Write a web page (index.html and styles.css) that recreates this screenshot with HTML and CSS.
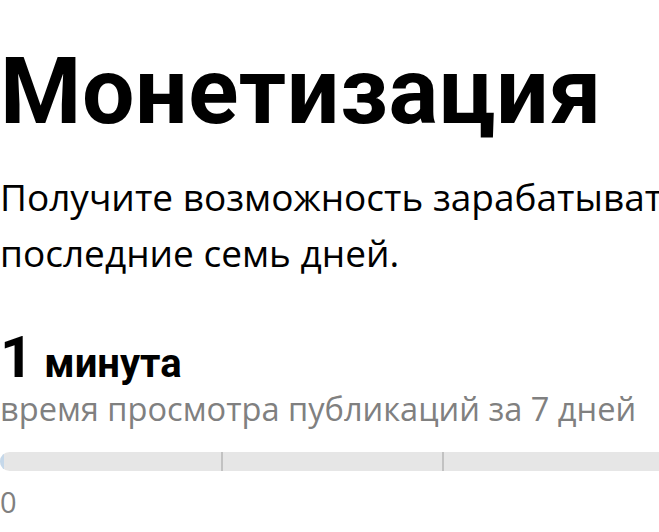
FILE: index.html
```html
<!DOCTYPE html>
<html lang="ru">
<head>
<meta charset="utf-8">
<link rel="stylesheet" href="styles.css">
</head>
<body>
<div class="page">
  <h1 class="title">Монетизация</h1>
  <p class="lead">Получите возможность зарабатывать на просмотрах за<br>последние семь дней.</p>
  <div class="value"><span class="num">1</span><span class="unit">минута</span></div>
  <div class="caption">время просмотра публикаций за 7 дней</div>
  <div class="bar">
    <div class="fill" style="width: 4px"></div>
    <div class="seg"></div>
    <div class="seg"></div>
    <div class="seg"></div>
  </div>
  <div class="scale"><span>0</span></div>
</div>
</body>
</html>
```
FILE: styles.css
```css
html, body {
  margin: 0;
  padding: 0;
  background: #fff;
  overflow: hidden;
}
.page {
  width: 1000px;
  font-family: "Open Sans", "Noto Sans", sans-serif;
  color: #000;
}
.title {
  margin: 0;
  padding-top: 38px;
  font-family: Roboto, "Noto Sans", sans-serif;
  font-size: 93px;
  line-height: 108px;
  font-weight: 700;
  letter-spacing: 0.6px;
}
.lead {
  margin: 23px 0 0;
  font-size: 37px;
  line-height: 56px;
  white-space: nowrap;
}
.value {
  margin-top: 46px;
  display: flex;
  align-items: baseline;
  font-family: Roboto, "Noto Sans", sans-serif;
  font-weight: 700;
}
.num {
  font-size: 58px;
  line-height: 60px;
}
.unit {
  margin-left: 11px;
  font-size: 40px;
  line-height: 40px;
}
.caption {
  margin-top: 2px;
  font-size: 32.6px;
  line-height: 40px;
  color: #808080;
}
.bar {
  position: relative;
  margin-top: 23px;
  width: 700px;
  height: 19px;
  border-radius: 10px;
  background: #e6e6e6;
  display: grid;
  grid-template-columns: 221px 221px 1fr;
  overflow: hidden;
}
.fill {
  position: absolute;
  left: 0;
  top: 0;
  bottom: 0;
  background: #c5d8ea;
}
.seg + .seg {
  border-left: 2px solid #c2c2c2;
}
.scale {
  margin-top: 13px;
  font-size: 29px;
  line-height: 36px;
  color: #808080;
}
```
